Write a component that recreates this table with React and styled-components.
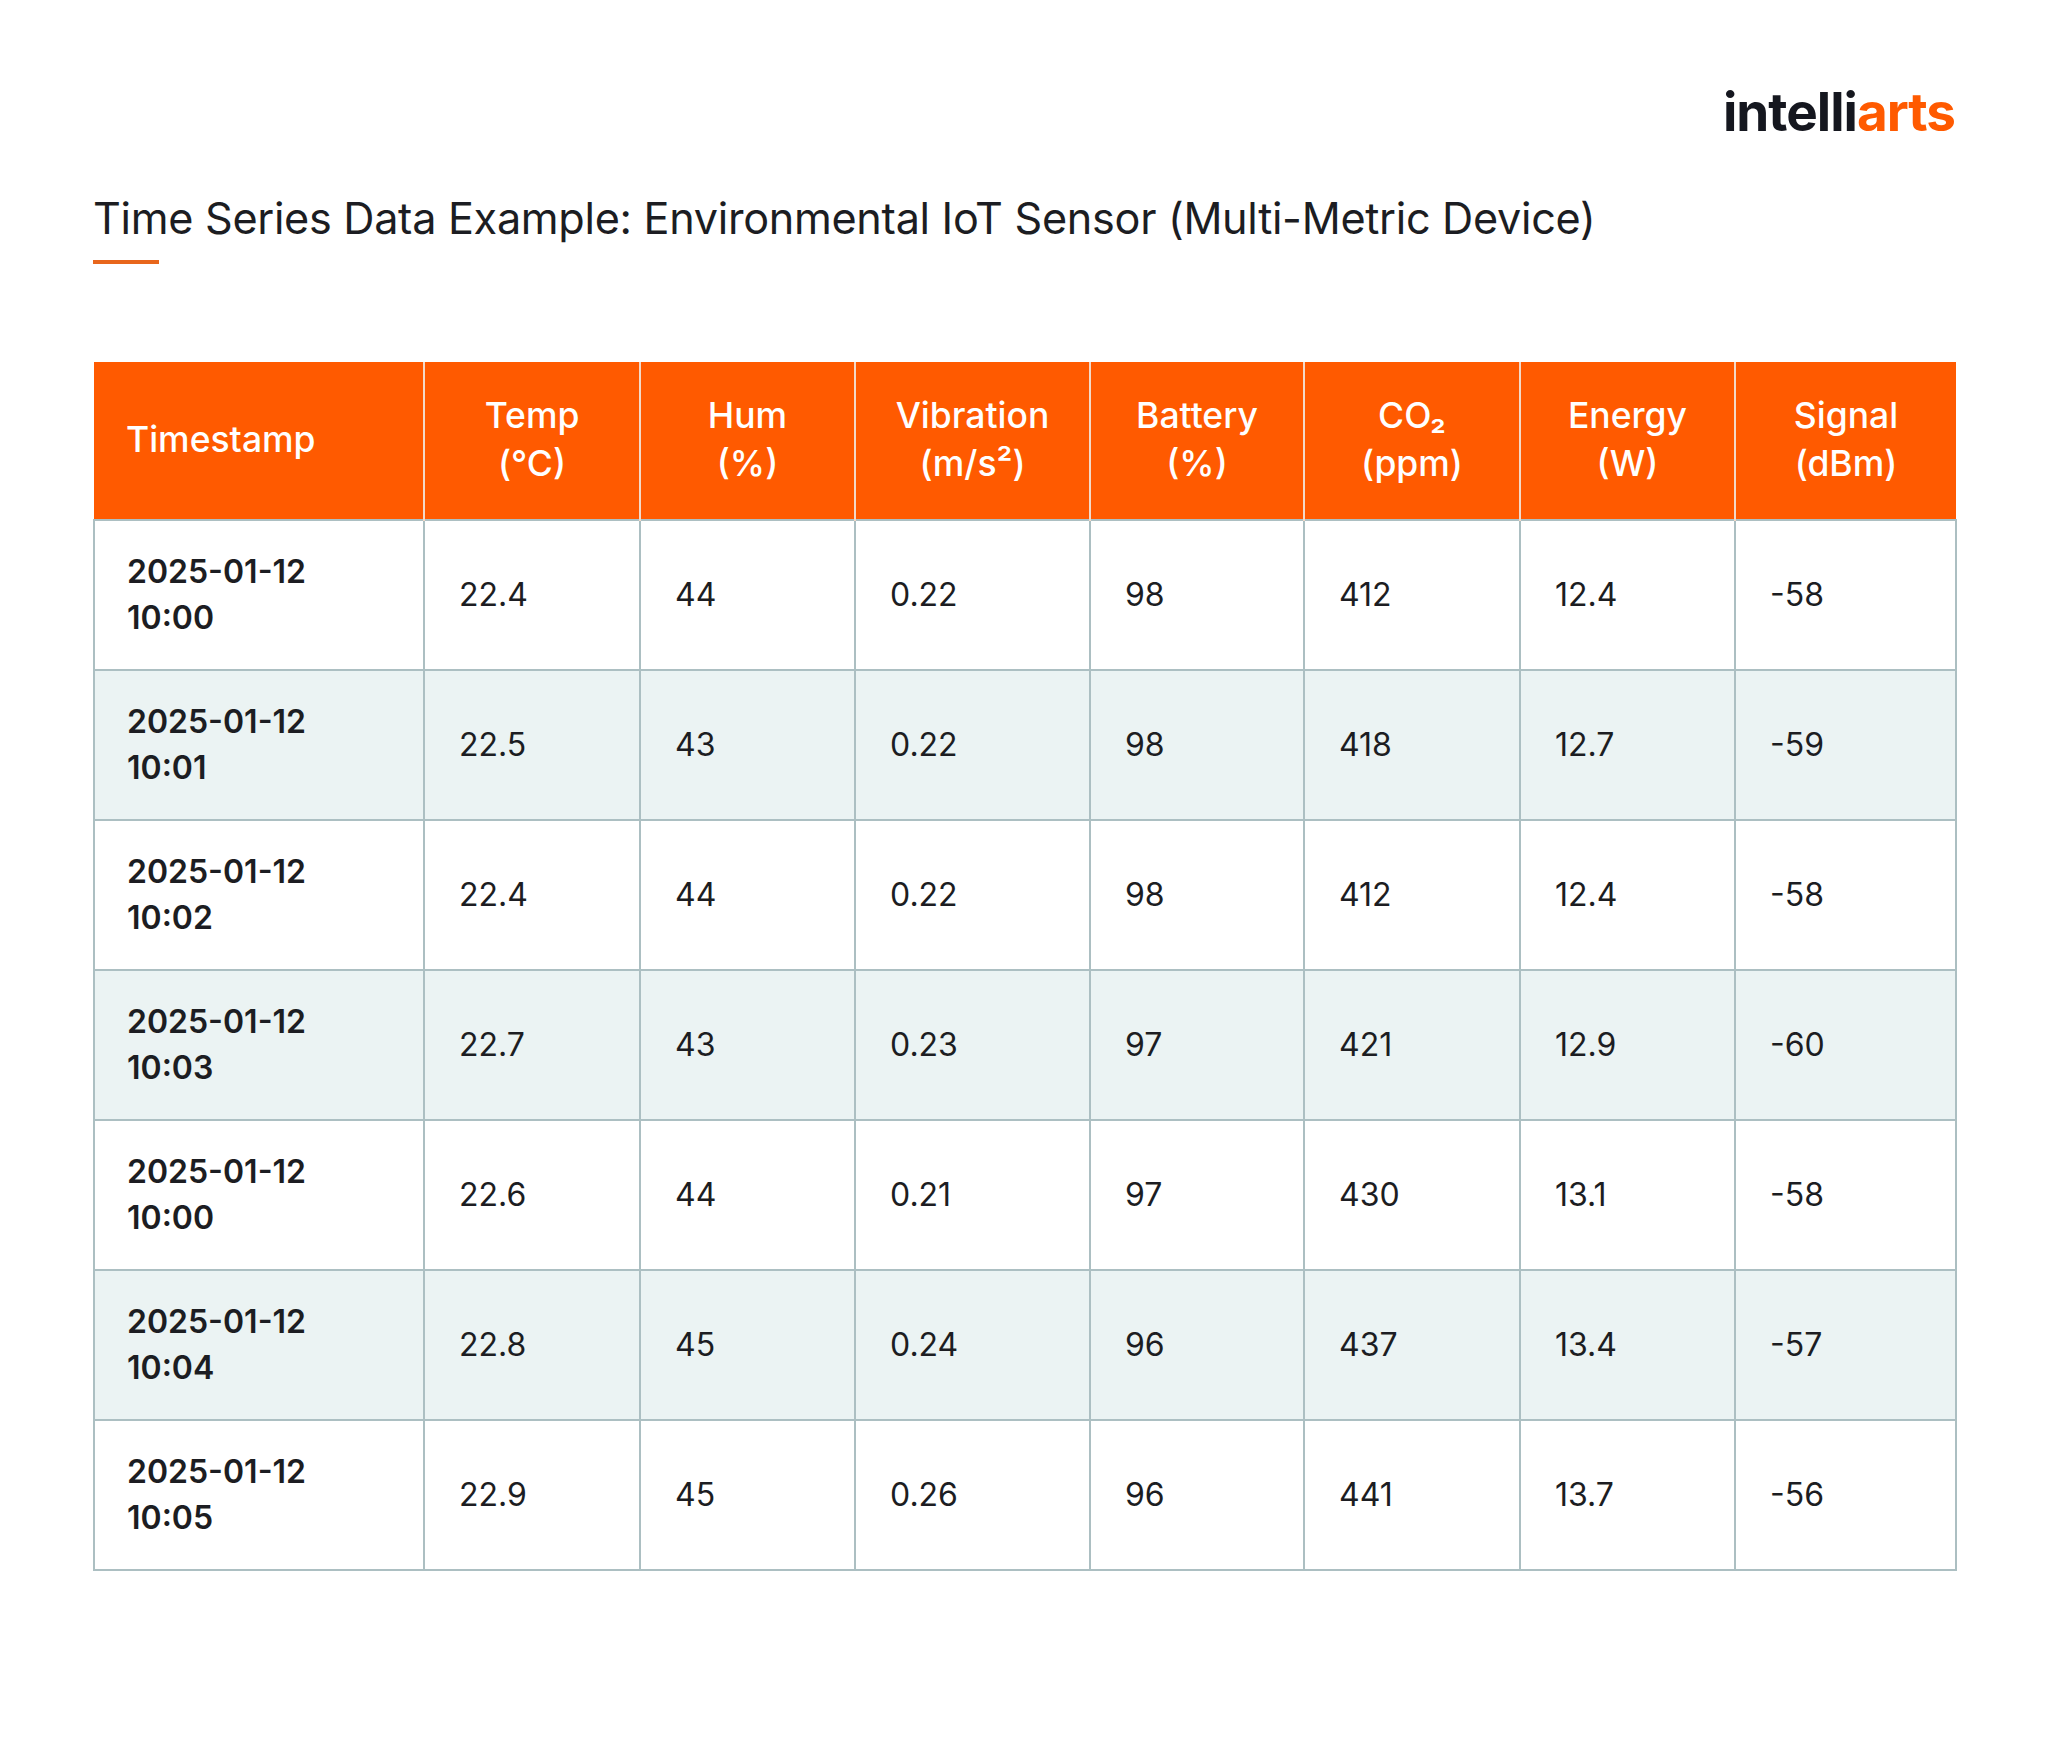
import React from 'react';
import styled, { createGlobalStyle } from 'styled-components';

const orange = '#ff5a00';
const ink = '#1c1d22';
const line = '#acbfc2';

const GlobalStyle = createGlobalStyle`
  html, body {
    margin: 0;
    padding: 0;
    background: #ffffff;
  }
  body {
    font-family: Inter, "Noto Sans", "Liberation Sans", sans-serif;
    color: ${ink};
  }
`;

const Page = styled.div`
  width: 2048px;
  height: 1743px;
  box-sizing: border-box;
  padding: 86px 93px 0 93px;
  display: flex;
  flex-direction: column;
`;

const TopBar = styled.div`
  display: flex;
  justify-content: flex-end;
`;

const Logo = styled.div`
  font-family: Inter, "Noto Sans", sans-serif;
  font-weight: 700;
  font-size: 53px;
  line-height: 1;
  letter-spacing: -1px;
  color: #15171f;
`;

const LogoAccent = styled.span`
  color: ${orange};
`;

const Title = styled.h1`
  margin: 54px 0 0 0;
  font-size: 43.2px;
  font-weight: 400;
  letter-spacing: -0.3px;
  line-height: 1.2;
  color: ${ink};
`;

const Underline = styled.div`
  width: 66px;
  height: 4px;
  margin-top: 15px;
  background: #e8661c;
`;

const Table = styled.table`
  margin-top: 98px;
  width: 1862px;
  border-collapse: collapse;
  table-layout: fixed;
`;

const HeadCell = styled.th`
  background: ${orange};
  color: #ffffff;
  height: 157px;
  padding: 0 ${p => (p.$left ? '32px' : '8px')};
  font-size: 35.5px;
  font-weight: 500;
  line-height: 48px;
  text-align: ${p => (p.$left ? 'left' : 'center')};
  border-left: 2px solid #f3d9c8;
  &:first-child {
    border-left: none;
  }
`;

const Row = styled.tr`
  background: ${p => (p.$alt ? '#ebf3f3' : '#ffffff')};
`;

const Cell = styled.td`
  height: 150px;
  box-sizing: border-box;
  border: 2px solid ${line};
  padding: 0 ${p => (p.$stamp ? '32px' : '34px')};
  font-size: 32px;
  font-weight: ${p => (p.$stamp ? 600 : 400)};
  line-height: 46px;
  color: ${ink};
  vertical-align: middle;
`;

const columns = [
  { key: 'ts', label: 'Timestamp', width: 330, left: true },
  { key: 'temp', label: ['Temp', '(°C)'], width: 216 },
  { key: 'hum', label: ['Hum', '(%)'], width: 215 },
  { key: 'vib', label: ['Vibration', '(m/s²)'], width: 235 },
  { key: 'bat', label: ['Battery', '(%)'], width: 214 },
  { key: 'co2', label: ['CO₂', '(ppm)'], width: 216 },
  { key: 'energy', label: ['Energy', '(W)'], width: 215 },
  { key: 'signal', label: ['Signal', '(dBm)'], width: 221 },
];

const rows = [
  ['10:00', '22.4', '44', '0.22', '98', '412', '12.4', '-58'],
  ['10:01', '22.5', '43', '0.22', '98', '418', '12.7', '-59'],
  ['10:02', '22.4', '44', '0.22', '98', '412', '12.4', '-58'],
  ['10:03', '22.7', '43', '0.23', '97', '421', '12.9', '-60'],
  ['10:00', '22.6', '44', '0.21', '97', '430', '13.1', '-58'],
  ['10:04', '22.8', '45', '0.24', '96', '437', '13.4', '-57'],
  ['10:05', '22.9', '45', '0.26', '96', '441', '13.7', '-56'],
];

const App = () => (
  <>
    <GlobalStyle />
    <Page>
      <TopBar>
        <Logo>
          intelli<LogoAccent>arts</LogoAccent>
        </Logo>
      </TopBar>
      <Title>Time Series Data Example: Environmental IoT Sensor (Multi-Metric Device)</Title>
      <Underline />
      <Table>
        <colgroup>
          {columns.map(c => (
            <col key={c.key} style={{ width: c.width }} />
          ))}
        </colgroup>
        <thead>
          <tr>
            {columns.map(c => (
              <HeadCell key={c.key} $left={c.left}>
                {Array.isArray(c.label) ? (
                  <>
                    {c.label[0]}
                    <br />
                    {c.label[1]}
                  </>
                ) : (
                  c.label
                )}
              </HeadCell>
            ))}
          </tr>
        </thead>
        <tbody>
          {rows.map((r, i) => (
            <Row key={i} $alt={i % 2 === 1}>
              <Cell $stamp>
                2025-01-12
                <br />
                {r[0]}
              </Cell>
              {r.slice(1).map((v, j) => (
                <Cell key={j}>{v}</Cell>
              ))}
            </Row>
          ))}
        </tbody>
      </Table>
    </Page>
  </>
);

export default App;
